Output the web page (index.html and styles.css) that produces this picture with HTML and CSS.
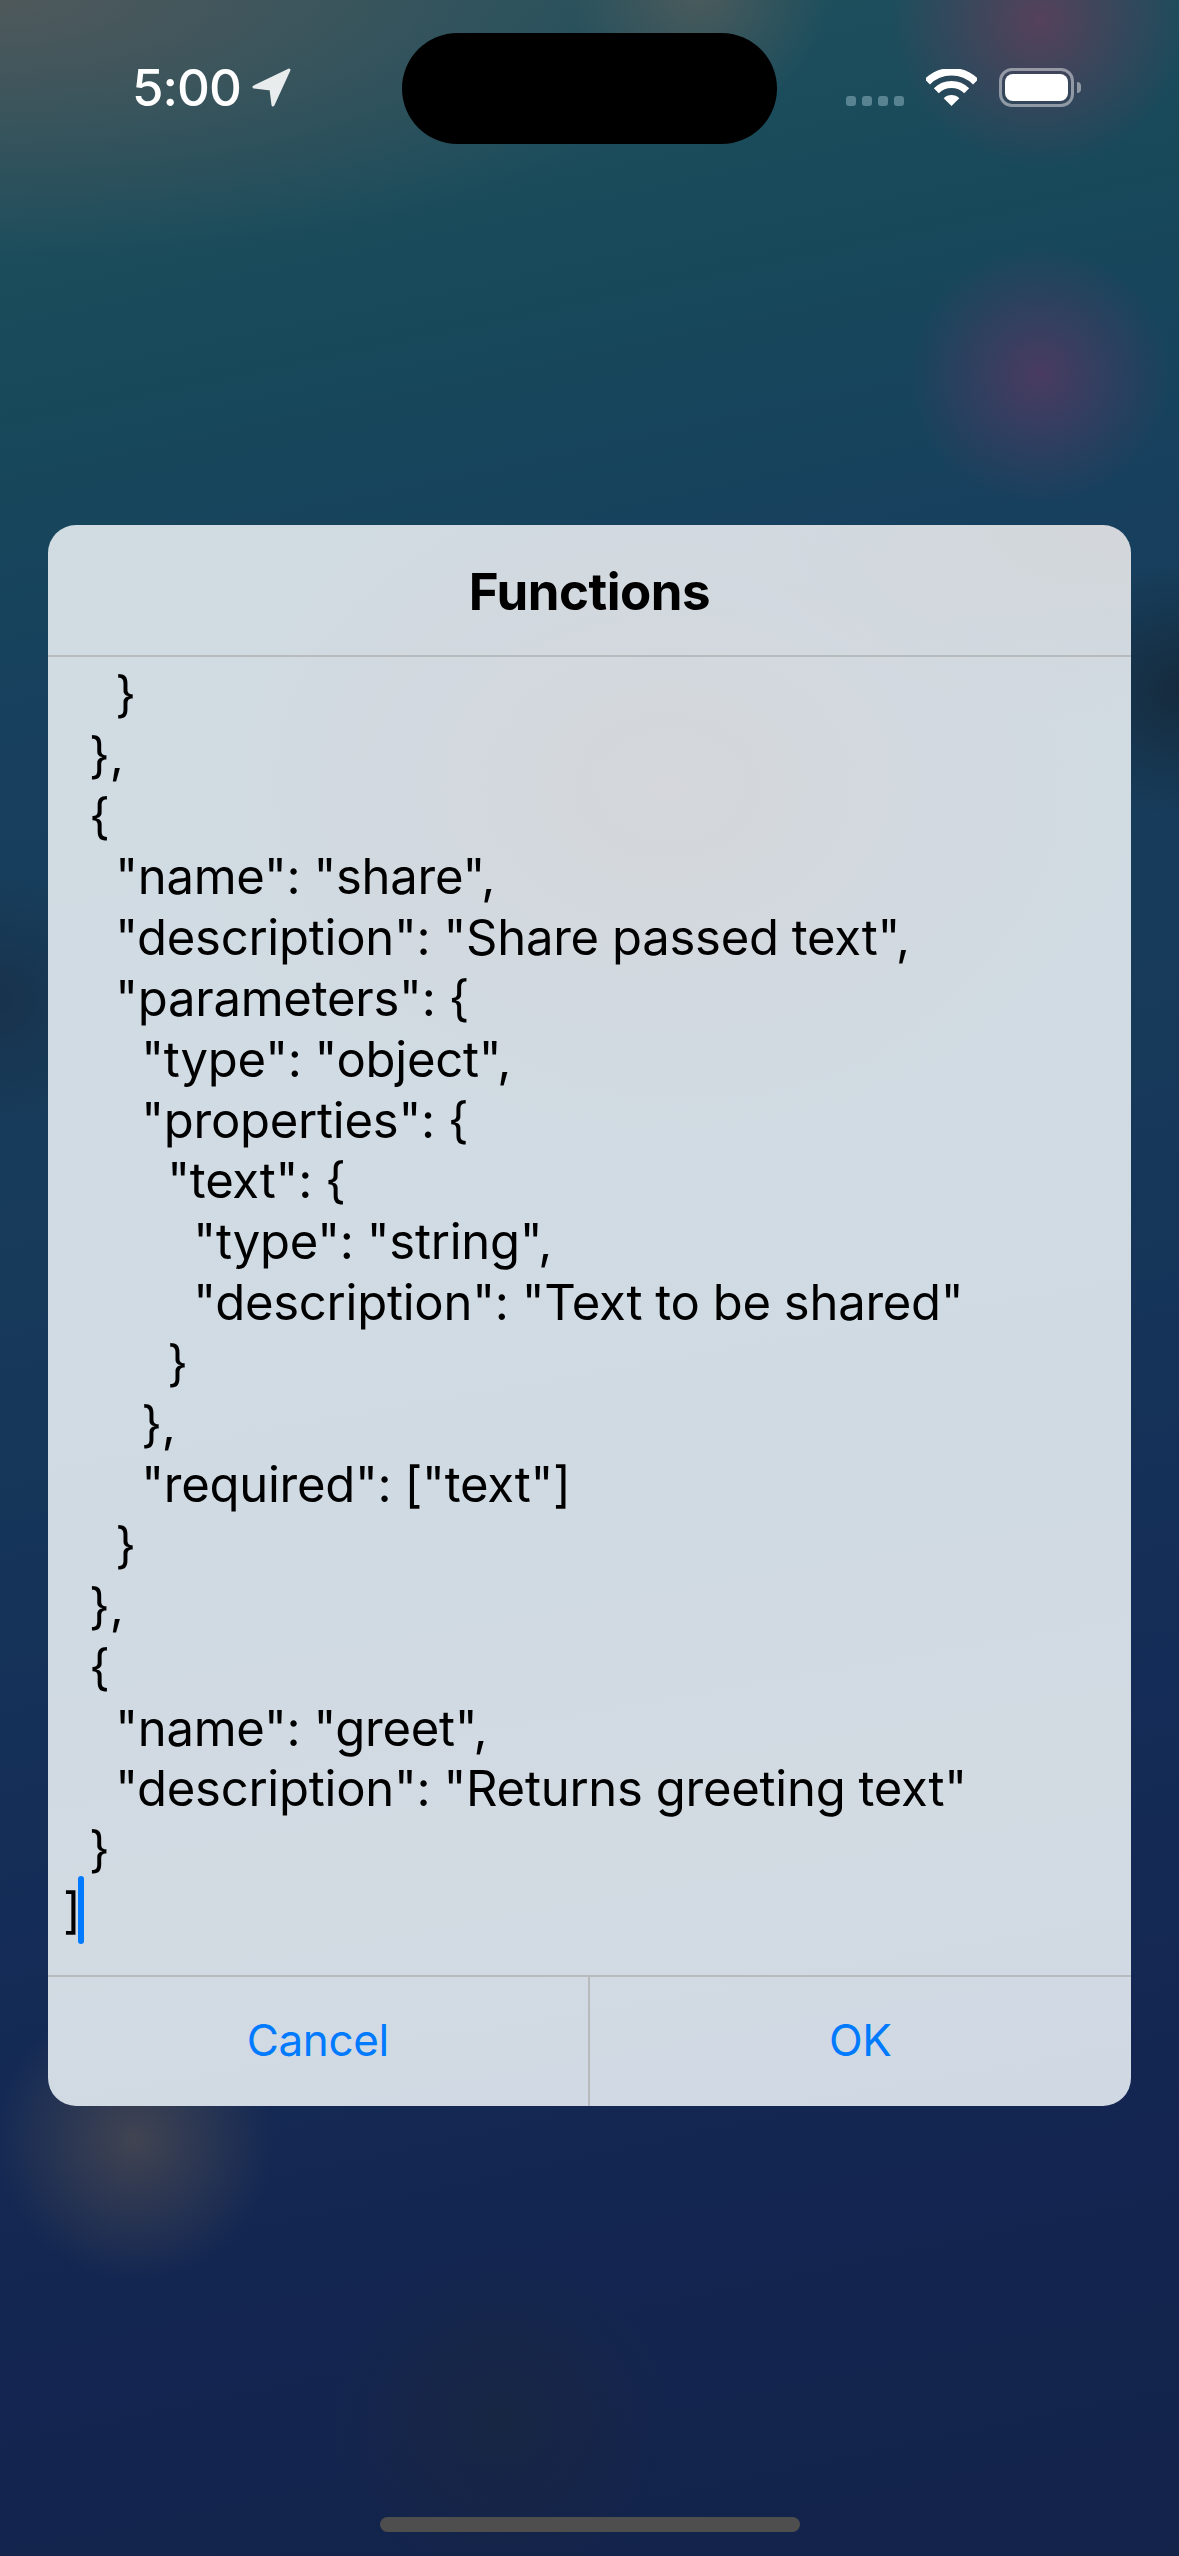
FILE: index.html
```html
<!DOCTYPE html>
<html lang="en">
<head>
<meta charset="utf-8">
<title>Functions</title>
<link rel="stylesheet" href="styles.css">
</head>
<body>
<div class="screen">
  <header class="status">
    <div class="status-left">
      <span class="time">5:00</span>
      <svg class="loc" viewBox="0 0 40 39"><path d="M37 2 L2 19 L19 21 L21 37 Z" fill="#e8ecec" stroke="#e8ecec" stroke-width="3" stroke-linejoin="round"/></svg>
    </div>
    <div class="island"></div>
    <div class="status-right">
      <div class="dots"><i></i><i></i><i></i><i></i></div>
      <svg class="wifi" viewBox="0 0 51 37">
        <path d="M1.300 12.800 A34.250 34.250 0 0 1 49.700 12.800" fill="none" stroke="#fff" stroke-width="7.500"/>
        <path d="M10.300 21.800 A21.500 21.500 0 0 1 40.700 21.800" fill="none" stroke="#fff" stroke-width="7"/>
        <path d="M25.500 37 L17.700 29.200 A11 11 0 0 1 33.300 29.200 Z" fill="#fff"/>
      </svg>
      <div class="battery"><div class="battery-body"><div class="battery-fill"></div></div><div class="battery-nub"></div></div>
    </div>
  </header>
  <main class="dialog">
    <h1 class="title">Functions</h1>
    <div class="editor"><pre class="code">    }
  },
  {
    "name": "share",
    "description": "Share passed text",
    "parameters": {
      "type": "object",
      "properties": {
        "text": {
          "type": "string",
          "description": "Text to be shared"
        }
      },
      "required": ["text"]
    }
  },
  {
    "name": "greet",
    "description": "Returns greeting text"
  }
]<span class="caret"></span></pre></div>
    <div class="buttons">
      <button class="btn btn-first">Cancel</button>
      <button class="btn">OK</button>
    </div>
  </main>
  <div class="home"></div>
</div>
</body>
</html>
```
FILE: styles.css
```css
* { box-sizing: border-box; }
html, body { margin: 0; padding: 0; }
body { width: 1179px; height: 2556px; overflow: hidden; font-family: Inter, "Liberation Sans", sans-serif; }
.screen {
  width: 1179px; height: 2556px; display: flex; flex-direction: column; align-items: center;
  background:
    radial-gradient(circle 130px at 1040px 375px, rgba(95,55,100,.7), rgba(95,55,100,0)),
    radial-gradient(circle 150px at 1040px 20px, rgba(110,60,90,.7), rgba(110,60,90,0)),
    radial-gradient(circle 130px at 700px -10px, rgba(110,100,90,.55), rgba(110,100,90,0)),
    radial-gradient(circle 140px at 135px 2140px, rgba(110,95,80,.5), rgba(110,95,80,0)),
    radial-gradient(circle 170px at 500px 2420px, rgba(30,40,50,.4), rgba(30,40,50,0)),
    radial-gradient(circle 130px at 1179px 690px, rgba(20,30,40,.6), rgba(20,30,40,0)),
    radial-gradient(circle 130px at 0 1000px, rgba(25,40,60,.5), rgba(25,40,60,0)),
    radial-gradient(ellipse 750px 260px at 0 0, rgba(90,90,90,.8), rgba(90,90,90,0)),
    linear-gradient(168deg, #23535f 0%, #17495a 14%, #17405e 26%, #173a5a 45%, #142e58 65%, #132550 85%, #13234a 100%);
}
.status { width: 100%; height: 144px; margin-top: 33px; display: grid; grid-template-columns: 402px 375px 402px; }
.status-left { display: flex; align-items: flex-start; padding-left: 132px; padding-top: 35px; gap: 11px; }
.time { color: #fff; font-weight: 500; font-size: 51px; line-height: 40px; letter-spacing: -1px; }
.loc { width: 40px; height: 39px; }
.island { height: 111px; background: #000; border-radius: 56px; }
.status-right { display: flex; align-items: flex-start; padding-left: 69px; padding-top: 35px; }
.dots { display: flex; gap: 6px; margin-top: 28px; }
.dots i { width: 10px; height: 10px; border-radius: 3px; background: rgba(150,185,195,.5); }
.wifi { width: 51px; height: 37px; margin-left: 22px; margin-top: 1px; }
.battery { display: flex; align-items: center; margin-left: 22px; }
.battery-body { width: 75px; height: 39px; padding: 3px; border: 3px solid rgba(255,255,255,.45); border-radius: 13px; }
.battery-fill { width: 100%; height: 100%; background: #fff; border-radius: 8px; }
.battery-nub { width: 4px; height: 11px; margin-left: 3px; background: rgba(255,255,255,.45); border-radius: 0 4px 4px 0; }
.dialog {
  width: 1083px; height: 1581px; margin-top: 348px; border-radius: 28px; overflow: hidden; display: flex; flex-direction: column;
  background:
    radial-gradient(ellipse 500px 380px at 620px 260px, rgba(214,213,216,.7), rgba(214,213,216,0)),
    radial-gradient(ellipse 420px 200px at 1083px 0, rgba(212,212,214,.7), rgba(212,212,214,0)),
    linear-gradient(170deg, #d0dbe2 0%, #d0dbe3 35%, #cfdae3 55%, #d2dae2 80%, #d0d8e4 100%);
}
.title { margin: 0; height: 132px; flex: none; text-align: center; font-size: 51px; line-height: 134px; font-weight: 700; letter-spacing: -.5px; color: #000; border-bottom: 2px solid #b8bbbe; }
.editor { flex: 1; padding: 8px 0 0 15px; overflow: hidden; }
.code { margin: 0; font-family: Inter, sans-serif; font-size: 49px; line-height: 60.800px; letter-spacing: -.25px; word-spacing: -.5px; color: #000; white-space: pre; }
.caret { display: inline-block; width: 6px; height: 68px; margin: -20px 0 -20px -3px; vertical-align: 4px; background: #007aff; border-radius: 3px; }
.buttons { height: 131px; flex: none; display: grid; grid-template-columns: 1fr 1fr; border-top: 2px solid #b8bbbe; }
.btn { border: 0; background: none; padding: 0 0 3px; font: 400 44px/1 Inter, sans-serif; letter-spacing: -.4px; color: #007aff; }
.btn-first { border-right: 2px solid #b8bbbe; }
.home { width: 420px; height: 15px; margin-top: 411px; background: #4e4e4e; border-radius: 8px; }
```
